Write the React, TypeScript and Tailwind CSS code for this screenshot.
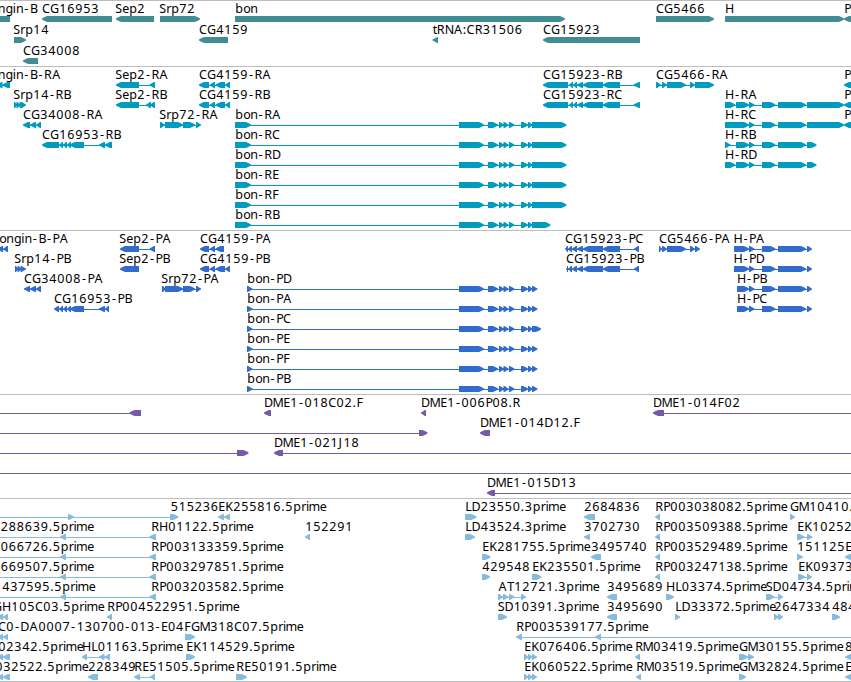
type Dir = "L" | "R";
/* x, label, direction, exon segments "a,b" separated by spaces, optional connector line "from,to" */
type Item = [number, string, Dir, string, string?];

const WIDTH = 851;

/* Advance of each glyph used in the labels; digits take 8. */
const ADVANCE: Record<string, number> = {
  A: 9, B: 8, C: 8, D: 9, E: 7, F: 7, G: 9, H: 9, J: 5, K: 8, L: 6.5, M: 10, N: 9, P: 7, R: 8, S: 7, T: 7,
  b: 8, e: 7, g: 7.5, i: 3, m: 10.5, n: 7.7, o: 7, p: 8, r: 5, t: 4, "-": 6.2, ".": 4, ":": 4,
};
const NUDGE: Record<string, number> = { "-": 0.9, C: 0.1, G: 0, M: -0.5, H: 0, D: 0, m: -0.4, i: 0, A: 0.4, ".": 0.3 };

function glyphX(x: number, label: string) {
  let pen = x;
  return label
    .split("")
    .map((c) => {
      const at = pen + (NUDGE[c] ?? 0.3);
      pen += ADVANCE[c] ?? 8;
      return at.toFixed(1);
    })
    .join(" ");
}

function seg(a: number, b: number, dir: Dir, y: number) {
  const small = b - a <= 6.5;
  const tip = dir === "R" ? b : a;
  const base = dir === "R" ? a : b;
  const s = dir === "R" ? -1 : 1;
  if (small) return `M${base} ${y}H${base - s}L${tip + s} ${y + 2}L${tip} ${y + 2.5}V${y + 3.5}L${tip + s} ${y + 4}L${base - s} ${y + 6}H${base}Z`;
  const neck = tip + s * 5;
  const mid = tip + s * 2.2;
  return `M${base} ${y}H${neck}L${mid} ${y + 1.2}L${tip} ${y + 2.6}V${y + 3.4}L${mid} ${y + 4.8}L${neck} ${y + 6}H${base}Z`;
}

function Lane({ items, color, height }: { items: Item[]; color: string; height: number }) {
  return (
    <svg width={WIDTH} height={height} className="block shrink-0 overflow-visible">
      {items.map(([x, label, dir, segs, line], i) => {
        const s = segs ? segs.split(" ").map((p) => p.split(",").map(Number)) : [];
        const [l0, l1] = line ? line.split(",").map(Number) : [s[0][0] + 2, s[s.length - 1][1] - 2];
        return (
          <g key={i}>
            <rect x={l0} y={18} width={Math.max(0, l1 - l0)} height={1} fill={color} shapeRendering="crispEdges" />
            {s.length > 0 && <path d={s.map(([a, b]) => seg(a, b, dir, 15)).join("")} fill={color} />}
            {label && (
              <text x={glyphX(x, label)} y={12} className="fill-black text-[12.5px]">
                {label}
              </text>
            )}
          </g>
        );
      })}
    </svg>
  );
}

function Track({ lanes, color, pitch, height }: { lanes: Item[][]; color: string; pitch: number; height: string }) {
  return (
    <section className={`flex flex-col border-t border-[#bdbdbd] overflow-hidden ${height}`}>
      {lanes.map((items, i) => (
        <Lane key={i} items={items} color={color} height={pitch} />
      ))}
    </section>
  );
}

const genes: Item[][] = [
  [
    [-2.5, "ngin-B", "L", "-20,10"],
    [42, "CG16953", "L", "42,112"],
    [115, "Sep2", "L", "116,154"],
    [159, "Srp72", "R", "160,200"],
    [235, "bon", "R", "235,565"],
    [656, "CG5466", "R", "656,714"],
    [725, "H", "R", "725,844"],
    [844, "P", "L", "844,870"],
  ],
  [
    [13, "Srp14", "R", "14,26"],
    [199, "CG4159", "L", "199,228"],
    [432.5, "tRNA:CR31506", "L", "432.5,438"],
    [543, "CG15923", "L", "543,640"],
  ],
  [[23, "CG34008", "L", "23,38"]],
];

const cg4159 = "199,209 209.7,215 215.7,225 225,230";
const cg15923 = "543,568 569,573 573,577 577,583 583,603 603,620 633.5,640";
const bonTail = "459,484 488,498 499,504 503.5,508.5 509,514.5 521,528 528,532.5";
const hTail = "749,754.5 762,775.5 778,806";

const bonR = (n: string, end = "566.5"): Item => [235, `bon-${n}`, "R", `235,251 ${bonTail} 532,${end}`];
const bonP = (n: string, end = "537.5"): Item => [247, `bon-${n}`, "R", `247,252.5 ${bonTail} 532,${end}`];
const pgene: Item = [844, "P", "L", "844,870"];

const transcripts: Item[][] = [
  [
    [-2.5, "ngin-B-RA", "L", "-4,2.5 2.5,10"],
    [115, "Sep2-RA", "L", "116,139 149.5,155"],
    [199, "CG4159-RA", "L", cg4159],
    [543, "CG15923-RB", "L", cg15923],
    [656, "CG5466-RA", "R", "656,661 662,667 667,686 690,695 695,714"],
    pgene,
  ],
  [
    [13, "Srp14-RB", "R", "14,17.5 16.5,20.5 19.5,23 21,26"],
    [115, "Sep2-RB", "L", "116,139 146,151 150,155"],
    [199, "CG4159-RB", "L", cg4159],
    [543, "CG15923-RC", "L", cg15923],
    [725, "H-RA", "R", `725,735.3 736,749 ${hTail} 807,844`],
    pgene,
  ],
  [
    [23, "CG34008-RA", "L", "23,30 30,36 36,41"],
    [159, "Srp72-RA", "R", "160,165 165,183 183,195 196,201"],
    bonR("RA"),
    [725, "H-RC", "R", `725,749 ${hTail} 807,844`],
    pgene,
  ],
  [
    [42, "CG16953-RB", "L", "42,59 59,63 63,67 67,71 70,84 99,105 105,112"],
    bonR("RC"),
    [725, "H-RB", "R", `725,730.5 736,749 ${hTail} 807,816.5`],
  ],
  [bonR("RD"), [725, "H-RD", "R", `725,735.3 736,749 ${hTail} 807,816.5`]],
  [bonR("RE")],
  [bonR("RF")],
  [bonR("RB", "550.5")],
];

const cg15923p = "565,568 568,572 572,577 577,583 583,603 603,620 634,639";

const proteins: Item[][] = [
  [
    [-1, "ongin-B-PA", "L", "-2,3 3,8"],
    [119, "Sep2-PA", "L", "120,139 149.5,155"],
    [200, "CG4159-PA", "L", "200,209 209.7,215 215.5,224"],
    [565, "CG15923-PC", "L", cg15923p],
    [659, "CG5466-PA", "R", "659,662 662,667 667,686 690,695 695,700"],
    [733.5, "H-PA", "R", `734,736 735,749 ${hTail} 807,812`],
  ],
  [
    [14, "Srp14-PB", "R", "15,18.5 17.5,21.5 20.5,26"],
    [119, "Sep2-PB", "L", "120,139"],
    [200, "CG4159-PB", "L", "200,209 209.7,215 215.7,225 225,230"],
    [566, "CG15923-PB", "L", cg15923p.replace("565", "566")],
    [733.5, "H-PD", "R", `734,736 735,749 ${hTail} 807,812`],
  ],
  [
    [24, "CG34008-PA", "L", "24,30 30,36 36,41"],
    [161, "Srp72-PA", "R", "162,166 165,183 183,195 196,201"],
    bonP("PD"),
    [737, "H-PB", "R", `737,749 ${hTail} 807,812`],
  ],
  [
    [54, "CG16953-PB", "L", "54,59 59,63 63,67 67,71 70,84 99,105 105,109"],
    bonP("PA"),
    [737, "H-PC", "R", `737,749 ${hTail} 807,812`],
  ],
  [bonP("PC", "541")],
  [bonP("PE")],
  [bonP("PF")],
  [bonP("PB")],
];

const clones: Item[][] = [
  [
    [0, "", "L", "129.5,141", "0,131"],
    [264, "DME1-018C02.F", "L", "264,271"],
    [421, "DME1-006P08.R", "L", "421,426"],
    [653, "DME1-014F02", "L", "653,664", "660,851"],
  ],
  [
    [0, "", "R", "419,427.5", "0,420"],
    [480, "DME1-014D12.F", "L", "480,490"],
  ],
  [
    [0, "", "R", "237,248.5", "0,238"],
    [274, "DME1-021J18", "L", "274,283", "280,851"],
  ],
  [[0, "", "R", "", "0,851"]],
  [[487, "DME1-015D13", "L", "487,495", "490,851"]],
];

const est: Item[][] = [
  [
    [170.5, "515236", "R", "68,74 170,178.5", "0,172"],
    [218, "EK255816.5prime", "L", "218,224 224,230"],
    [465, "LD23550.3prime", "R", "465,476.5"],
    [584, "2684836", "L", "584,595"],
    [655, "RP003038082.5prime", "L", "655,660"],
    [790, "GM10410.", "R", "790,795"],
  ],
  [
    [0.5, "288639.5prime", "L", "60,66 149.5,156", "0,150"],
    [151, "RH01122.5prime", "L", "149.5,156"],
    [305, "152291", "L", "305,310"],
    [465, "LD43524.3prime", "R", "465,475"],
    [584, "3702730", "L", "584,590"],
    [655, "RP003509388.5prime", "L", "655,660"],
    [797, "EK10252", "R", "797,804.5 807,812.5"],
  ],
  [
    [0.5, "066726.5prime", "L", "60,66 149.5,156", "0,150"],
    [151, "RP003133359.5prime", "L", "149.5,156"],
    [482, "EK281755.5prime", "R", "482,490.5"],
    [591, "3495740", "L", "591,601"],
    [655, "RP003529489.5prime", "L", "655,660"],
    [797, "151125", "R", "797,803"],
    [845, "E", "L", "845,860"],
  ],
  [
    [0.5, "669507.5prime", "L", "60,66 149.5,156", "0,150"],
    [151, "RP003297851.5prime", "L", "149.5,156"],
    [482, "429548", "R", "482,490"],
    [532, "EK235501.5prime", "R", "532,541.5"],
    [655, "RP003247138.5prime", "L", "655,660"],
    [798, "EK09373", "R", "798,805 807,812"],
  ],
  [
    [2, "437595.5prime", "L", "60,66 149.5,156", "0,150"],
    [151, "RP003203582.5prime", "L", "149.5,156"],
    [498, "AT12721.3prime", "R", "498,503 503,508.5 509,514.5 521,526"],
    [607, "3495689", "L", "607,617"],
    [666, "HL03374.5prime", "R", "666,674"],
    [765.5, "SD04734.5prim", "R", "766,774.5 778,783"],
  ],
  [
    [-7, "GH105C03.5prime", "L", "-3,3 3,8"],
    [107, "RP004522951.5prime", "L", "107,112"],
    [497.5, "SD10391.3prime", "R", "498,507"],
    [607, "3495690", "L", "607,617"],
    [675, "LD33372.5prime", "R", "675,680"],
    [774, "2647334", "R", "774,778.5 778,783"],
    [832, "484", "R", "832,840"],
  ],
  [
    [-2, "C0-DA0007-130700-013-E04", "L", "-3,3 3,8"],
    [184, "FGM318C07.5prime", "R", "185,195"],
    [516, "RP003539177.5prime", "L", "516,522 595,601", "520,851"],
  ],
  [
    [-2, "02342.5prime", "L", "-3,3 3,10"],
    [82, "HL01163.5prime", "L", "82,87 99,104.5 104.5,110"],
    [186, "EK114529.5prime", "R", "186,195"],
    [524, "EK076406.5prime", "R", "524,528.5 528,532.5 532,537"],
    [635, "RM03419.5prime", "L", "635,640"],
    [739, "GM30155.5prime", "R", "739,748 748,754"],
    [845, "8", "L", "845,851.5"],
  ],
  [
    [-5, "032522.5prime", "L", "-3,3 3,10"],
    [88, "228349", "L", "88,98"],
    [134, "RE51505.5prime", "L", "134,140 150,155"],
    [236, "RE50191.5prime", "R", "236,247"],
    [524, "EK060522.5prime", "R", "524,528.5 528,532.5 532,537"],
    [636, "RM03519.5prime", "L", "636,641"],
    [739, "GM32824.5prime", "R", "739,746"],
    [845, "E", "L", "845,851.5"],
  ],
];

export default function App() {
  return (
    <main className="flex h-[682px] w-[851px] flex-col overflow-hidden bg-white font-['Noto_Sans',sans-serif]">
      <Track lanes={genes} color="#408e94" pitch={21} height="h-[66px]" />
      <Track lanes={transcripts} color="#009bbe" pitch={20} height="h-[164px]" />
      <Track lanes={proteins} color="#316ccc" pitch={20} height="h-[164px]" />
      <Track lanes={clones} color="#7759a8" pitch={20} height="h-[104px]" />
      <Track lanes={est} color="#87bbdd" pitch={20} height="h-[183px]" />
      <div className="h-px bg-[#bdbdbd]" />
    </main>
  );
}
